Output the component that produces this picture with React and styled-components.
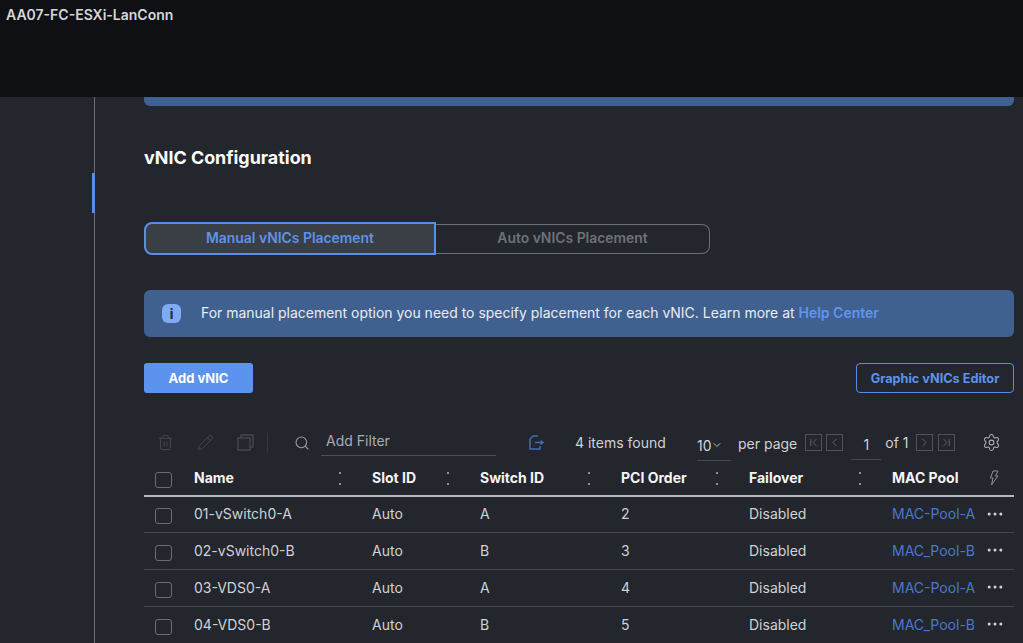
import React from "react";
import styled, { createGlobalStyle } from "styled-components";
import { Search, Pencil, Trash2, ChevronDown, ChevronLeft, ChevronRight, ChevronFirst, ChevronLast, Settings, MoreHorizontal } from "lucide-react";

const GlobalStyle = createGlobalStyle`
  html, body { margin: 0; height: 100%; overflow: hidden; background: #23262c; }
  * { box-sizing: border-box; }
  body { font-family: Inter, "Liberation Sans", Arial, sans-serif; }
`;

const Page = styled.div`
  width: 1023px;
  height: 643px;
  display: flex;
  flex-direction: column;
  overflow: hidden;
`;

const TopBar = styled.header`
  height: 97px;
  flex: none;
  background: #0e1013;
  color: #d5d7da;
  font-size: 14px;
  font-weight: 600;
  line-height: 18px;
  padding: 6px 6px;
`;

const Body = styled.div`
  flex: 1;
  display: flex;
  min-height: 0;
`;

const Side = styled.aside`
  position: relative;
  width: 95px;
  flex: none;
  background: #23262c;
  border-right: 1px solid #6a6e75;
`;

const SideMark = styled.div`
  position: absolute;
  top: 76px;
  right: -1px;
  width: 3px;
  height: 40px;
  background: #5a8ee6;
`;

const Main = styled.main`
  flex: 1;
  padding-left: 49px;
  padding-right: 9px;
  min-width: 0;
`;

const TopStrip = styled.div`
  height: 9px;
  background: #40608f;
  border-radius: 0 0 6px 6px;
`;

const Heading = styled.h2`
  margin: 41px 0 53px;
  font-size: 17.9px;
  line-height: 22px;
  font-weight: 700;
  color: #fbfbfc;
`;

const Tabs = styled.div`
  display: flex;
  align-items: center;
`;

const Tab = styled.div`
  height: ${(p) => (p.$on ? "33px" : "30px")};
  width: ${(p) => (p.$on ? "292px" : "274px")};
  padding-bottom: 1px;
  display: flex;
  align-items: center;
  justify-content: center;
  font-size: 13.9px;
  font-weight: 600;
  color: ${(p) => (p.$on ? "#5f92ea" : "#6e7278")};
  background: ${(p) => (p.$on ? "#3a3e45" : "transparent")};
  border: ${(p) => (p.$on ? "2px solid #5a8ee6" : "1px solid #6b6f75")};
  border-left: ${(p) => (p.$on ? "2px solid #5a8ee6" : "none")};
  border-radius: ${(p) => (p.$on ? "8px 0 0 8px" : "0 8px 8px 0")};
`;

const Banner = styled.div`
  margin-top: 35px;
  height: 47px;
  background: #40608f;
  border-radius: 6px;
  display: flex;
  align-items: center;
  padding: 0 0 2px 18px;
  gap: 20px;
  font-size: 13.98px;
  color: #e9edf3;
`;

const InfoBadge = styled.span`
  width: 19px;
  height: 19px;
  margin-top: 2px;
  border-radius: 6px;
  background: #7fabf5;
  color: #24344f;
  display: flex;
  align-items: center;
  justify-content: center;
  font-size: 13px;
  font-weight: 800;
`;

const HelpLink = styled.a`
  color: #5f96f0;
  font-weight: 600;
`;

const Actions = styled.div`
  margin-top: 26px;
  display: flex;
  justify-content: space-between;
  align-items: center;
`;

const PrimaryButton = styled.button`
  width: 109px;
  height: 30px;
  border: none;
  border-radius: 3px;
  background: #5c93ef;
  color: #fff;
  font: 700 13px Inter, sans-serif;
`;

const OutlineButton = styled.button`
  width: 158px;
  height: 30px;
  border: 1px solid #5a8ee6;
  border-radius: 4px;
  background: transparent;
  color: #5f92ea;
  font: 700 12.7px Inter, sans-serif;
`;

const Toolbar = styled.div`
  margin-top: 32px;
  height: 35px;
  display: flex;
  align-items: center;
  color: #cfd2d6;
  font-size: 14px;
`;

const ToolIcons = styled.div`
  display: flex;
  align-items: center;
  gap: 23px;
  width: 123px;
  padding-left: 13px;
  color: #44484e;
`;

const ToolRule = styled.span`
  width: 1px;
  height: 20px;
  background: #33373d;
`;

const FilterIcon = styled.span`
  width: 53px;
  padding-left: 26px;
  display: flex;
  color: #9a9da2;
`;

const FilterBox = styled.div`
  width: 175px;
  height: 28px;
  margin-top: -1px;
  padding: 0 5px 2px;
  display: flex;
  align-items: center;
  color: #a9acb1;
  border-bottom: 1px solid #4b4f55;
`;

const ExportIcon = styled.svg`
  margin-left: 32px;
  width: 17px;
  height: 17px;
  flex: none;
`;

const Found = styled.span`
  margin-left: 30px;
  width: 122px;
  white-space: nowrap;
`;

const PageSize = styled.div`
  width: 34px;
  height: 30px;
  margin-top: 6px;
  display: flex;
  align-items: center;
  border-bottom: 1px solid #44484e;
  overflow: hidden;
  white-space: nowrap;
  color: #b5b8bc;
`;

const SizeValue = styled.span`
  width: 14px;
  overflow: hidden;
  color: #d2d4d8;
`;

const PerPage = styled.span`
  margin: 2px 8px 0 7px;
  white-space: nowrap;
`;

const PageBtn = styled.span`
  width: 17px;
  height: 17px;
  margin-right: ${(p) => p.$gap}px;
  flex: none;
  border: 1px solid #4f5359;
  color: #73777d;
  display: flex;
  align-items: center;
  justify-content: center;
`;

const PageInput = styled.span`
  width: 30px;
  height: 29px;
  margin: 5px 4px 0 4px;
  display: flex;
  align-items: center;
  justify-content: center;
  border-bottom: 1px solid #44484e;
`;

const OfText = styled.span`
  width: 31px;
  white-space: nowrap;
`;

const Gear = styled.span`
  margin-left: 27px;
  display: flex;
  color: #aeb1b5;
`;

const COLUMNS = "50px 178px 108px 141px 128px 143px 93px 29px";

const Row = styled.div`
  display: grid;
  grid-template-columns: ${COLUMNS};
  align-items: center;
  height: ${(p) => p.$h}px;
  padding-bottom: ${(p) => (p.$head ? 0 : 2)}px;
  border-bottom: ${(p) => (p.$head ? "2px solid #b4b7bb" : "1px solid #44484e")};
  color: ${(p) => (p.$head ? "#f4f5f6" : "#cfd2d6")};
  font-size: 14px;
  font-weight: ${(p) => (p.$head ? 700 : 400)};
`;

const Check = styled.span`
  width: 17px;
  height: 16px;
  margin-left: 11px;
  margin-top: 5px;
  border: 1.5px solid #6a6e74;
  border-radius: 3px;
`;

const HeadCell = styled.div`
  position: relative;
  white-space: nowrap;
`;

const SortDots = styled.span`
  position: absolute;
  top: 3px;
  right: 31px;
  width: 2px;
  height: 13px;
  border-top: 2px solid #8c8f94;
  border-bottom: 2px solid #8c8f94;
`;

const PoolLink = styled.a`
  color: #4a78d0;
  white-space: nowrap;
`;

const Dots = styled.span`
  display: flex;
  color: #d5d7da;
`;

const BoltIcon = styled.svg`
  width: 10px;
  height: 16px;
  margin-left: 4px;
`;

const columns = ["Name", "Slot ID", "Switch ID", "PCI Order", "Failover"];

const rows = [
  ["01-vSwitch0-A", "Auto", "A", "2", "Disabled", "MAC-Pool-A", 36],
  ["02-vSwitch0-B", "Auto", "B", "3", "Disabled", "MAC_Pool-B", 37],
  ["03-VDS0-A", "Auto", "A", "4", "Disabled", "MAC-Pool-A", 37],
  ["04-VDS0-B", "Auto", "B", "5", "Disabled", "MAC_Pool-B", 37],
];

export default function App() {
  return (
    <Page>
      <GlobalStyle />
      <TopBar>AA07-FC-ESXi-LanConn</TopBar>
      <Body>
        <Side>
          <SideMark />
        </Side>
        <Main>
          <TopStrip />
          <Heading>vNIC Configuration</Heading>
          <Tabs>
            <Tab $on>Manual vNICs Placement</Tab>
            <Tab>Auto vNICs Placement</Tab>
          </Tabs>
          <Banner>
            <InfoBadge>i</InfoBadge>
            <span>
              For manual placement option you need to specify placement for each vNIC. Learn more at{" "}
              <HelpLink>Help Center</HelpLink>
            </span>
          </Banner>
          <Actions>
            <PrimaryButton>Add vNIC</PrimaryButton>
            <OutlineButton>Graphic vNICs Editor</OutlineButton>
          </Actions>
          <Toolbar>
            <ToolIcons>
              <Trash2 size={17} strokeWidth={1.4} />
              <Pencil size={17} strokeWidth={1.4} />
              <svg width="17" height="17" viewBox="0 0 17 17" fill="none" stroke="currentColor" strokeWidth="1.4">
                <path d="M1 4h12v12H1zM4 4V1h12v12h-3" />
              </svg>
            </ToolIcons>
            <ToolRule />
            <FilterIcon>
              <Search size={16} strokeWidth={1.6} />
            </FilterIcon>
            <FilterBox>Add Filter</FilterBox>
            <ExportIcon viewBox="0 0 17 17" fill="none" stroke="#3f6cb8" strokeWidth="1.5">
              <path d="M10 2H5L2 5v10h10v-3M7 8.5h8M12.5 6.5l2.5 2-2.5 2" />
            </ExportIcon>
            <Found>4 items found</Found>
            <PageSize>
              <SizeValue>10</SizeValue>
              <ChevronDown size={12} />
            </PageSize>
            <PerPage>per page</PerPage>
            <PageBtn $gap={4}>
              <ChevronFirst size={13} strokeWidth={1.4} />
            </PageBtn>
            <PageBtn $gap={4}>
              <ChevronLeft size={13} strokeWidth={1.4} />
            </PageBtn>
            <PageInput>1</PageInput>
            <OfText>of 1</OfText>
            <PageBtn $gap={5}>
              <ChevronRight size={13} strokeWidth={1.4} />
            </PageBtn>
            <PageBtn $gap={0}>
              <ChevronLast size={13} strokeWidth={1.4} />
            </PageBtn>
            <Gear>
              <Settings size={19} strokeWidth={1.3} />
            </Gear>
          </Toolbar>
          <Row $head $h={37}>
            <Check />
            {columns.map((label) => (
              <HeadCell key={label}>
                {label}
                <SortDots />
              </HeadCell>
            ))}
            <HeadCell>MAC Pool</HeadCell>
            <BoltIcon viewBox="0 0 10 16" fill="none" stroke="#8c8f94" strokeWidth="1">
              <path d="M4 1h5L6.5 6H9L2.5 15 4 8H1.5z" />
            </BoltIcon>
          </Row>
          {rows.map(([name, slot, sw, pci, failover, pool, h]) => (
            <Row key={name} $h={h}>
              <Check />
              <div>{name}</div>
              <div>{slot}</div>
              <div>{sw}</div>
              <div>{pci}</div>
              <div>{failover}</div>
              <PoolLink>{pool}</PoolLink>
              <Dots>
                <MoreHorizontal size={20} strokeWidth={1.6} />
              </Dots>
            </Row>
          ))}
        </Main>
      </Body>
    </Page>
  );
}
